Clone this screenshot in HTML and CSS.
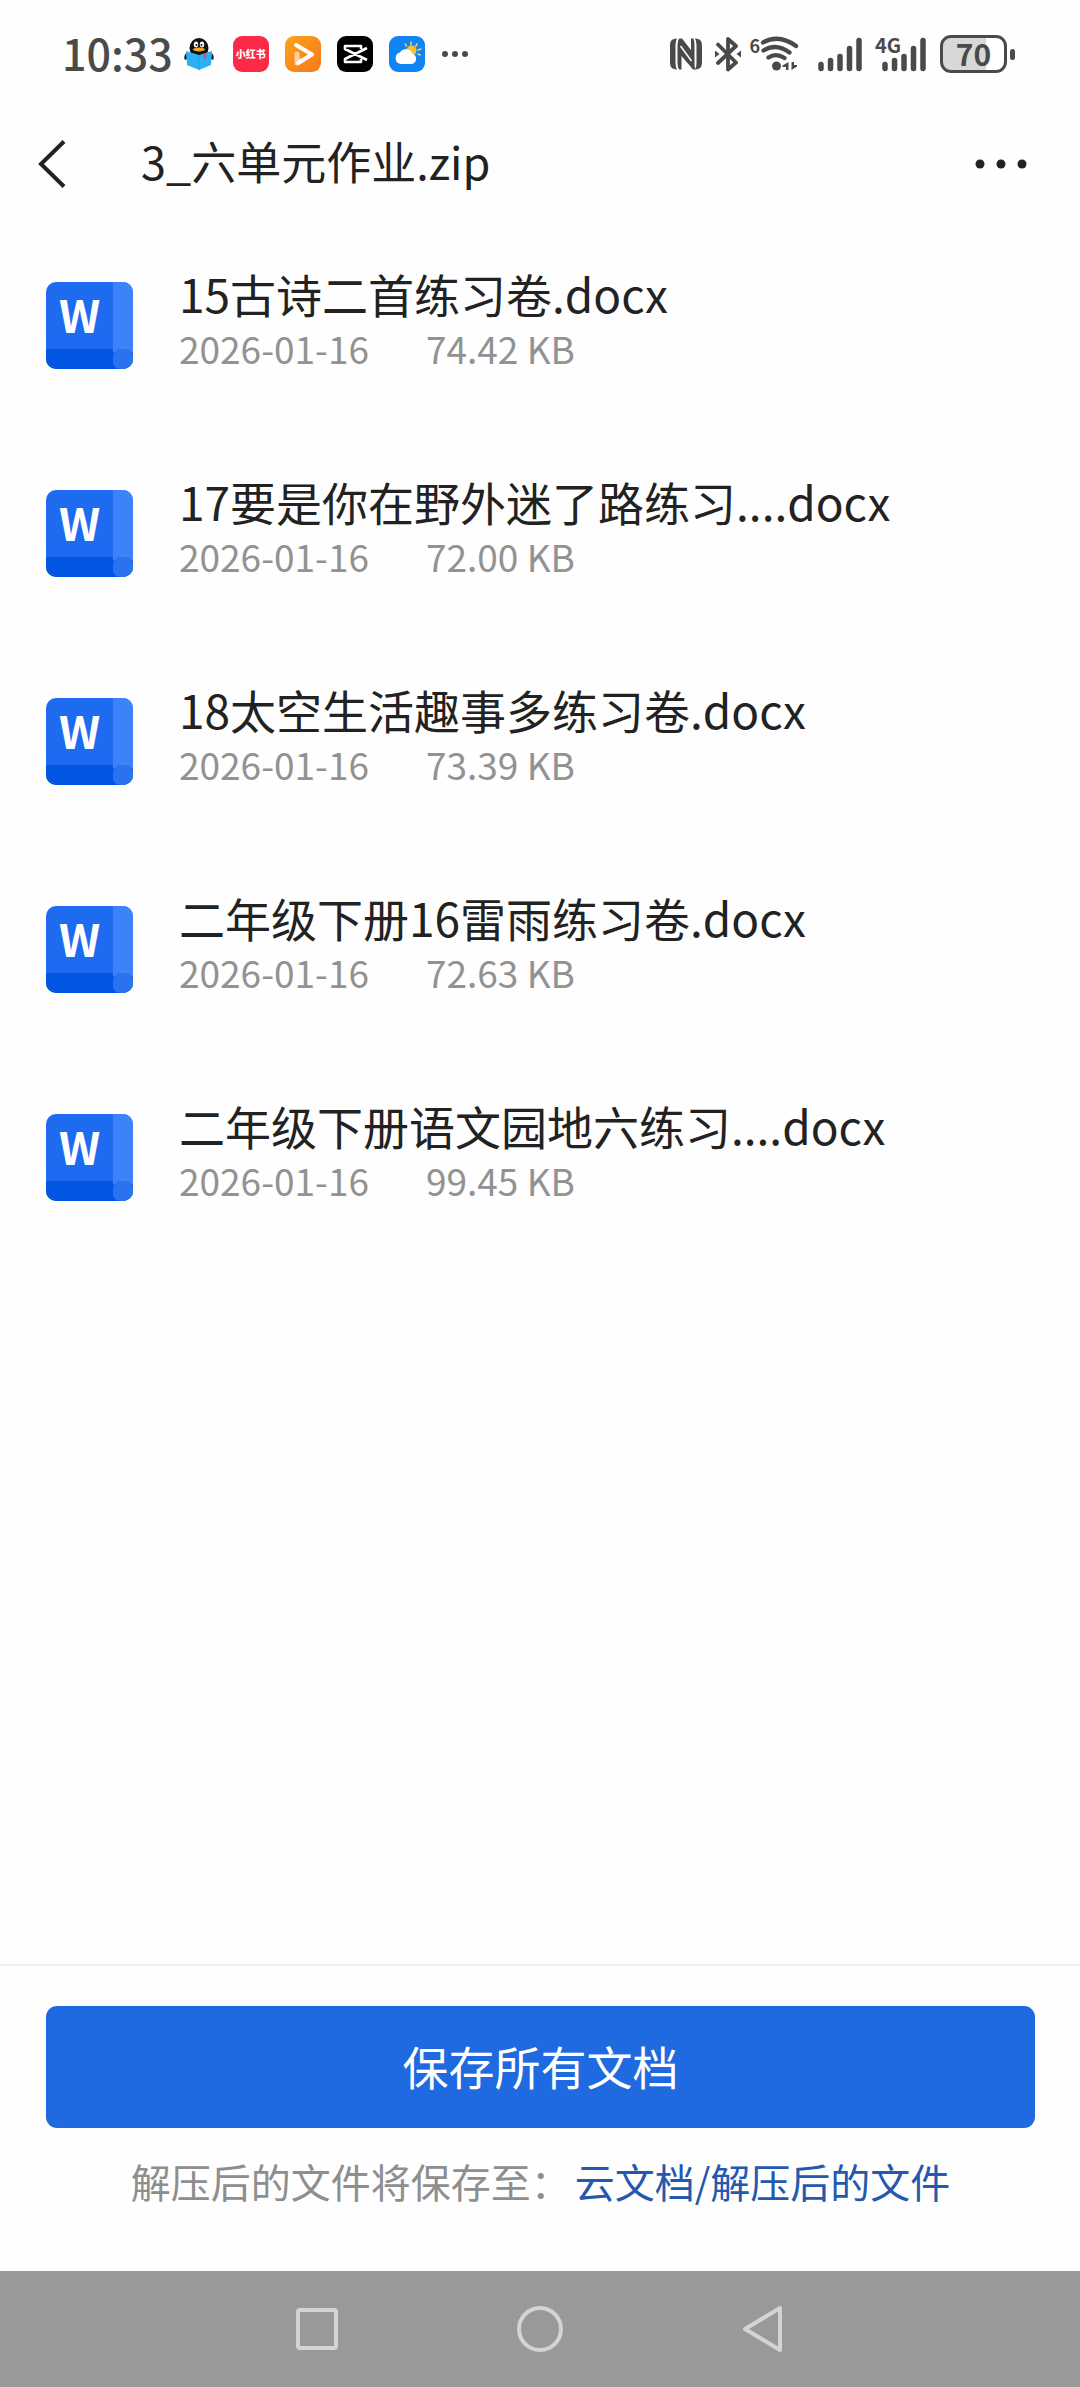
FILE: index.html
```html
<!DOCTYPE html>
<html lang="zh-CN">
<head>
    <meta charset="UTF-8">
    <meta name="viewport" content="width=device-width, initial-scale=1.0">
    <title>3_六单元作业.zip</title>
    <link rel="stylesheet" href="styles.css">
</head>
<body>

    <!-- shared shapes -->
    <svg class="defs" aria-hidden="true">
        <clipPath id="word-clip"><rect width="87" height="87" rx="10"/></clipPath>
        <symbol id="word-file" viewBox="0 0 87 87">
            <g clip-path="url(#word-clip)">
                <rect width="87" height="87" fill="#1e6bf0"/>
                <rect y="67" width="87" height="20" fill="#0256e3"/>
                <rect x="67" width="20" height="70" fill="#3c82fb"/>
                <rect x="67" y="67" width="20" height="20" rx="7" fill="#2a72ee"/>
            </g>
        </symbol>
        <symbol id="signal" viewBox="0 0 44 36">
            <path d="M3 28v4M12.500 24v8M22 20v12M31.500 12v20M41 4v28" transform="translate(0 .5)" fill="none" stroke="#4a4a4a" stroke-width="5.500" stroke-linecap="round"/>
        </symbol>
    </svg>

    <div class="status-bar">
        <span class="time">10:33</span>
        <div class="app-icons">
            <svg class="app-icon" viewBox="0 0 36 36">
                <ellipse cx="18" cy="12" rx="9.500" ry="10" fill="#111"/>
                <path d="M5 17q-3 4-1 7l4-2zM31 17q3 4 1 7l-4-2z" fill="#222"/>
                <ellipse cx="15" cy="8.500" rx="2.200" ry="3" fill="#fff"/>
                <ellipse cx="21" cy="8.500" rx="2.200" ry="3" fill="#fff"/>
                <circle cx="15.500" cy="9" r="1" fill="#111"/>
                <circle cx="20.500" cy="9" r="1" fill="#111"/>
                <ellipse cx="18" cy="13.500" rx="6" ry="1.900" fill="#f7a823"/>
                <path d="M5 15l13 4 13-4-1 14-12 5-12-5z" fill="#2bb0f5"/>
                <path d="M18 19v15" stroke="#1ea0e8" stroke-width="1"/>
                <path d="M22.500 18l3-1v6l-1.500-1-1.500 2z" fill="#b85a9a"/>
            </svg>
            <span class="app-icon red-app">小红书</span>
            <svg class="app-icon" viewBox="0 0 36 36">
                <defs>
                    <linearGradient id="orange" x2="1" y2="1"><stop stop-color="#fba31b"/><stop offset="1" stop-color="#f7771b"/></linearGradient>
                </defs>
                <rect width="36" height="36" rx="9" fill="url(#orange)"/>
                <path d="M12 18v9l5-2.500" fill="none" stroke="#ffd0a0" stroke-width="5" stroke-linejoin="round" stroke-linecap="round"/>
                <path d="M11 9l16 9.500L13 27" fill="none" stroke="#fff" stroke-width="4" stroke-linejoin="round" stroke-linecap="round"/>
            </svg>
            <svg class="app-icon" viewBox="0 0 36 36">
                <rect width="36" height="36" rx="9" fill="#000"/>
                <path d="M30 12L8 23v3h16v-3M30 24L8 13v-3h16v3" fill="none" stroke="#fff" stroke-width="2.600" stroke-linejoin="round"/>
            </svg>
            <svg class="app-icon" viewBox="0 0 36 36">
                <rect width="36" height="36" rx="9" fill="#0f84f2"/>
                <path d="M22 6v3M28 8l-1.500 2.500M32 13l-3 1M31 19l-2-1M16 8l1.500 2" stroke="#ffd34d" stroke-width="1.500" stroke-linecap="round"/>
                <circle cx="22.500" cy="14.500" r="5" fill="#fdc12f"/>
                <path d="M12 28a5.800 5.800 0 0 1-1-11.400 7 7 0 0 1 12.500 1.200A5.300 5.300 0 0 1 23 28z" fill="#fff"/>
            </svg>
            <svg class="more-apps" viewBox="0 0 28 8">
                <g fill="#4a4a4a"><circle cx="4" cy="4" r="3"/><circle cx="14" cy="4" r="3"/><circle cx="24" cy="4" r="3"/></g>
            </svg>
        </div>

        <div class="system-icons">
            <svg class="nfc" viewBox="0 0 34 36">
                <path d="M8 2.500C2 3 1 5 1 11v14c0 6 1 8 7 8.500Q6.500 31 6.500 27V9Q6.500 5 8 2.500zM26 33.500c6-.5 7-2.500 7-8.500V11c0-6-1-8-7-8.500Q27.500 5 27.500 9v18q0 4-1.500 6.500z" fill="#4a4a4a"/>
                <path d="M10 2.500h3L22 14V2.500h2.500Q25.500 5 25.500 9v18q0 4 1 6.500H24L12.500 20v13.500H10Q8.500 31 8.500 27V9q0-4 1.500-6.500z" fill="#4a4a4a"/>
                <path d="M11.500 10L22.500 25" stroke="#fff" stroke-width="1.500"/>
            </svg>
            <svg class="bluetooth" viewBox="0 0 26 36">
                <path d="M3 8.500l18 18-8 7V3l8 7L3 27" fill="none" stroke="#4a4a4a" stroke-width="3.800" stroke-linejoin="round" stroke-linecap="round"/>
                <path d="M0 14.500l4.500 3.500L0 21.500zM26 14.500L21.500 18l4.500 3.500z" fill="#4a4a4a"/>
            </svg>
            <div class="wifi-group">
                <span class="wifi-gen">6</span>
                <svg class="wifi" viewBox="0 0 40 36">
                    <path d="M3 6.500Q19 -2.500 36 10M3.500 14.500Q16 6.500 29.500 16.500M8.500 21.500Q16 16.500 24.500 22" fill="none" stroke="#4a4a4a" stroke-width="4.300" stroke-linecap="round"/>
                    <circle cx="16.500" cy="30" r="4.500" fill="#4a4a4a"/>
                    <path d="M28.500 26v8h-2.500v-3h-3.500v-1.500zM31.500 34v-8h2.500v3h3v1.500z" fill="#4a4a4a"/>
                </svg>
            </div>
            <svg class="signal"><use href="#signal"/></svg>
            <div class="mobile-group">
                <svg class="signal"><use href="#signal"/></svg>
                <span class="network">4G</span>
            </div>
            <div class="battery"><span class="battery-level">70</span></div>
        </div>
    </div>

    <header class="header">
        <button class="icon-button" aria-label="返回">
            <svg width="32" height="50" viewBox="0 0 32 50"><path d="M27 2.500L4 25l23 22.500" fill="none" stroke="#222" stroke-width="4"/></svg>
        </button>
        <h1>3_六单元作业.zip</h1>
        <button class="icon-button" aria-label="更多">
            <svg width="52" height="10" viewBox="0 0 52 10"><g fill="#222"><circle cx="5" cy="5" r="4.500"/><circle cx="26" cy="5" r="4.500"/><circle cx="47" cy="5" r="4.500"/></g></svg>
        </button>
    </header>

    <main>
        <ul class="file-list">
            <li><a class="file" href="#">
                <div class="file-icon"><svg><use href="#word-file"/></svg><span>W</span></div>
                <div class="file-info">
                    <p class="file-name">15古诗二首练习卷.docx</p>
                    <p class="file-meta"><span>2026-01-16</span><span>74.42 KB</span></p>
                </div>
            </a></li>
            <li><a class="file" href="#">
                <div class="file-icon"><svg><use href="#word-file"/></svg><span>W</span></div>
                <div class="file-info">
                    <p class="file-name">17要是你在野外迷了路练习....docx</p>
                    <p class="file-meta"><span>2026-01-16</span><span>72.00 KB</span></p>
                </div>
            </a></li>
            <li><a class="file" href="#">
                <div class="file-icon"><svg><use href="#word-file"/></svg><span>W</span></div>
                <div class="file-info">
                    <p class="file-name">18太空生活趣事多练习卷.docx</p>
                    <p class="file-meta"><span>2026-01-16</span><span>73.39 KB</span></p>
                </div>
            </a></li>
            <li><a class="file" href="#">
                <div class="file-icon"><svg><use href="#word-file"/></svg><span>W</span></div>
                <div class="file-info">
                    <p class="file-name">二年级下册16雷雨练习卷.docx</p>
                    <p class="file-meta"><span>2026-01-16</span><span>72.63 KB</span></p>
                </div>
            </a></li>
            <li><a class="file" href="#">
                <div class="file-icon"><svg><use href="#word-file"/></svg><span>W</span></div>
                <div class="file-info">
                    <p class="file-name">二年级下册语文园地六练习....docx</p>
                    <p class="file-meta"><span>2026-01-16</span><span>99.45 KB</span></p>
                </div>
            </a></li>
        </ul>
    </main>

    <footer class="save-panel">
        <button class="save-button">保存所有文档</button>
        <p class="save-path">解压后的文件将保存至：<a href="#">云文档/解压后的文件</a></p>
    </footer>

    <nav class="nav-bar">
        <button class="icon-button" aria-label="最近任务">
            <svg width="48" height="48" viewBox="0 0 48 48"><rect x="5" y="5" width="38" height="38" rx="2"/></svg>
        </button>
        <button class="icon-button" aria-label="主屏幕">
            <svg width="48" height="48" viewBox="0 0 48 48"><circle cx="24" cy="24" r="21"/></svg>
        </button>
        <button class="icon-button" aria-label="返回上一级">
            <svg width="48" height="48" viewBox="0 0 48 48"><path d="M41 3v42L6 24z"/></svg>
        </button>
    </nav>

</body>
</html>
```
FILE: styles.css
```css
* {
    margin: 0;
    padding: 0;
    box-sizing: border-box;
    font-family: "Noto Sans CJK SC", sans-serif;
}

body {
    min-height: 100vh;
    display: flex;
    flex-direction: column;
    background-color: #fefefe;
    color: #222;
}

svg {
    display: block;
    flex-shrink: 0;
}

.defs {
    position: absolute;
    width: 0;
    height: 0;
}

.icon-button {
    display: flex;
    align-items: center;
    justify-content: center;
    background: none;
    border: none;
    cursor: pointer;
}

/* status bar */
.status-bar {
    display: flex;
    align-items: center;
    height: 108px;
    padding: 0 73px 0 62px;
    color: #4a4a4a;
}

.time {
    padding-bottom: 4px;
    font-size: 43px;
    font-weight: 500;
    line-height: 60px;
}

.app-icons {
    display: flex;
    align-items: center;
    gap: 16px;
    margin-left: 8px;
}

.app-icon {
    width: 36px;
    height: 36px;
}

.red-app {
    border-radius: 9px;
    background-color: #fb2b47;
    color: #fff;
    font-size: 10px;
    font-weight: 900;
    line-height: 36px;
    text-align: center;
}

.more-apps {
    width: 28px;
    height: 8px;
}

.system-icons {
    display: flex;
    align-items: center;
    margin-left: auto;
}

.nfc {
    width: 34px;
    height: 36px;
    margin-right: 12px;
}

.bluetooth {
    width: 26px;
    height: 36px;
    margin-right: 8px;
}

.wifi-group {
    display: flex;
    align-items: flex-start;
    margin-right: 18px;
}

.wifi-gen {
    font-size: 18px;
    font-weight: 700;
    line-height: 18px;
}

.wifi {
    width: 40px;
    height: 36px;
}

.signal {
    width: 44px;
    height: 36px;
}

.mobile-group {
    position: relative;
    margin-left: 20px;
}

.network {
    position: absolute;
    top: 0;
    left: -7px;
    font-size: 20px;
    font-weight: 700;
    line-height: 18px;
}

.battery {
    position: relative;
    width: 67px;
    height: 38px;
    margin-left: 14px;
    border: 3px solid #4a4a4a;
    border-radius: 11px;
    background: linear-gradient(to right, #d8d8d8 70%, #fff 70%);
    text-align: center;
}

.battery::after {
    content: "";
    position: absolute;
    top: 11px;
    right: -11px;
    width: 5px;
    height: 11px;
    border-radius: 3px;
    background-color: #4a4a4a;
}

.battery-level {
    display: block;
    font-size: 30px;
    font-weight: 700;
    line-height: 30px;
}

/* title row */
.header {
    display: flex;
    align-items: center;
    height: 112px;
    padding: 0 53px 0 37px;
}

.header h1 {
    flex: 1;
    margin-left: 72px;
    padding-bottom: 6px;
    font-size: 45px;
    font-weight: 400;
    line-height: 60px;
}

/* files */
main {
    flex: 1;
}

.file-list {
    list-style: none;
}

.file {
    display: flex;
    align-items: flex-start;
    gap: 46px;
    height: 208px;
    padding: 43px 46px 0;
    color: #222;
    text-decoration: none;
}

.file-icon {
    position: relative;
    width: 87px;
    height: 87px;
    margin-top: 19px;
}

.file-icon svg {
    width: 87px;
    height: 87px;
}

.file-icon span {
    position: absolute;
    top: 2px;
    left: 13px;
    color: #fff;
    font-size: 45px;
    font-weight: 700;
    line-height: 60px;
}

.file-name {
    font-size: 46px;
    line-height: 60px;
}

.file-meta {
    display: flex;
    gap: 57px;
    font-size: 37px;
    line-height: 50px;
    color: #929292;
}

/* bottom panel */
.save-panel {
    padding: 40px 45px 60px 46px;
    border-top: 2px solid #f0f0f0;
    text-align: center;
}

.save-button {
    width: 100%;
    height: 122px;
    padding-bottom: 5px;
    border: none;
    border-radius: 11px;
    background-color: #1f6ae1;
    color: #fff;
    font-size: 46px;
    cursor: pointer;
}

.save-path {
    margin-top: 23px;
    font-size: 40px;
    line-height: 60px;
    color: #8e8e8e;
}

.save-path a {
    margin-left: 4px;
    color: #2459ad;
    text-decoration: none;
}

.nav-bar {
    display: grid;
    grid-template-columns: repeat(3, 1fr);
    height: 116px;
    padding: 0 19%;
    background-color: #999;
}

.nav-bar svg {
    fill: none;
    stroke: #d4d4d4;
    stroke-width: 4;
    stroke-linejoin: round;
}
```
